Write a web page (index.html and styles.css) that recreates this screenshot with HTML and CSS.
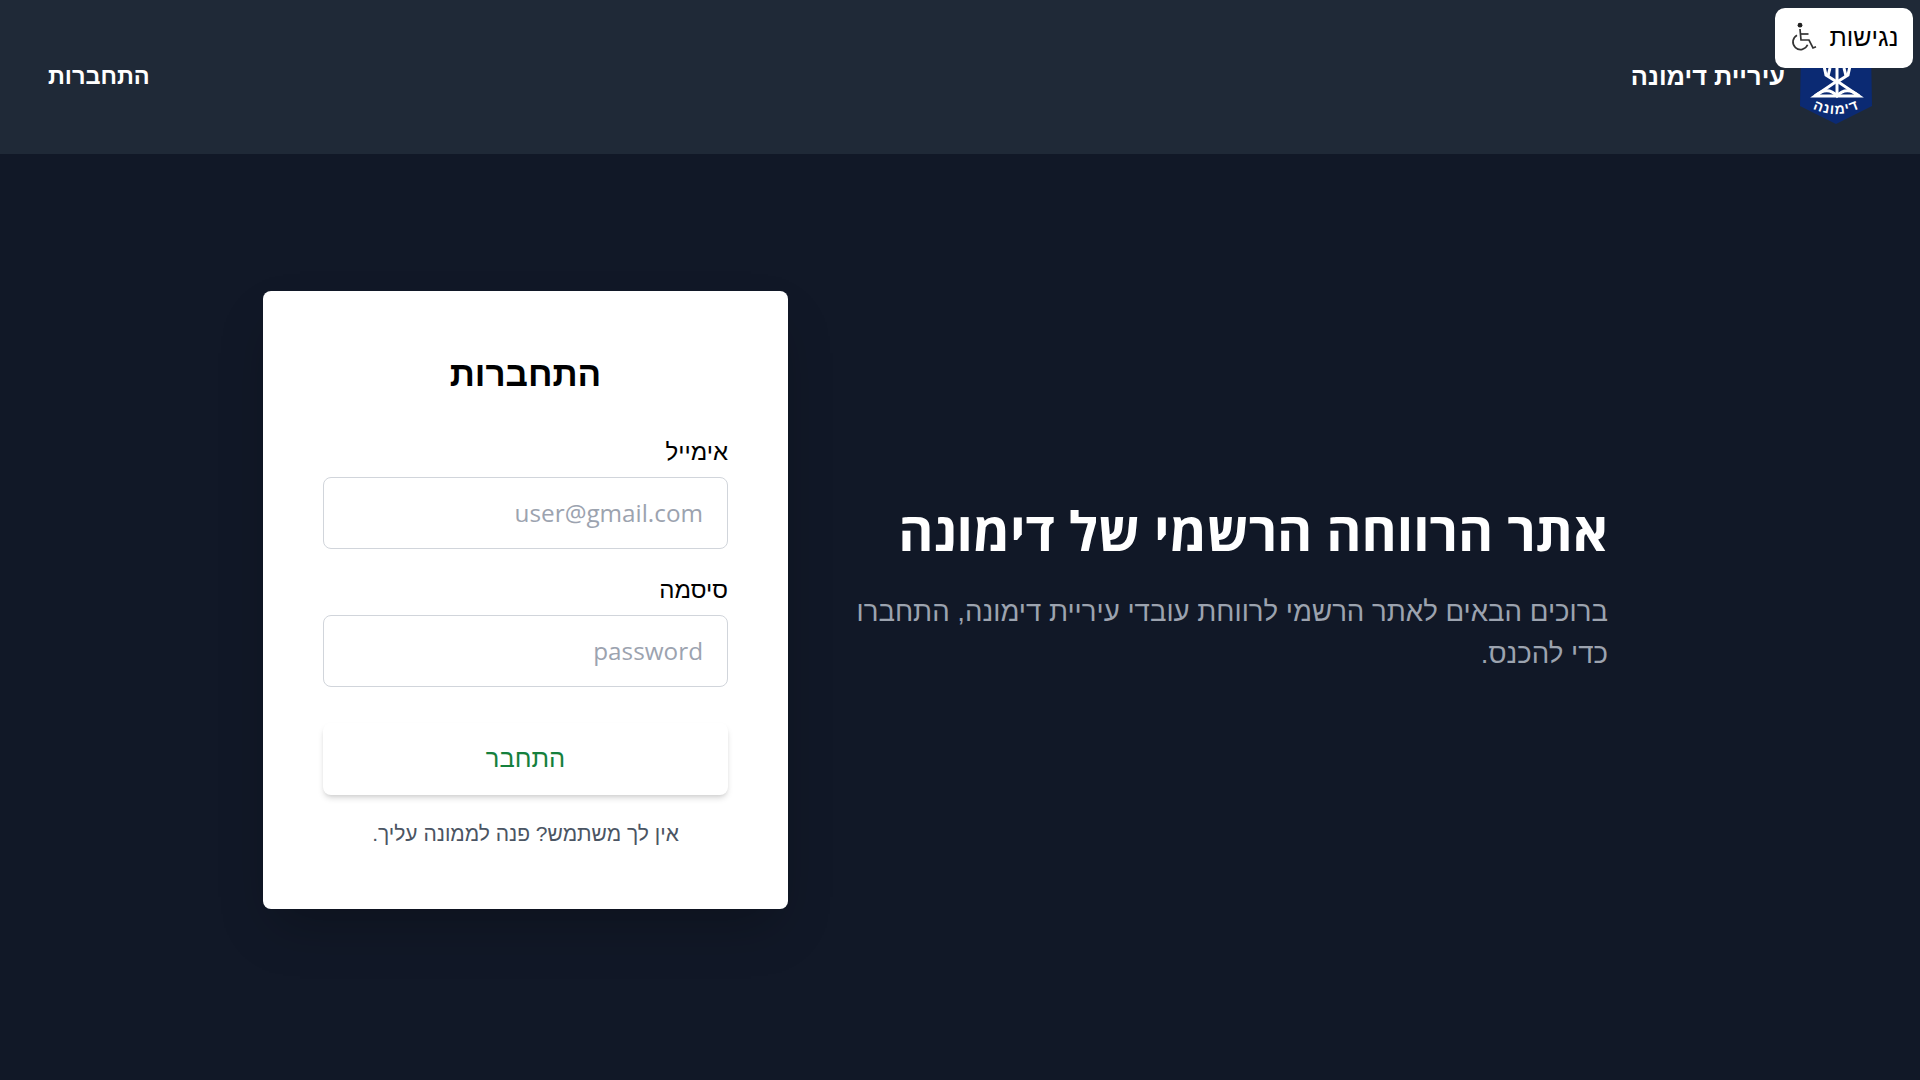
FILE: index.html
```html
<!DOCTYPE html>
<html lang="he" dir="rtl">
<head>
<meta charset="utf-8">
<title>עיריית דימונה</title>
<link rel="stylesheet" href="styles.css">
</head>
<body>
<button class="a11y" type="button">
  <span class="a11y-label">נגישות</span>
  <svg class="a11y-icon" viewBox="0 0 28 30" width="28" height="30" fill="none" stroke="#333" stroke-width="1.7" aria-hidden="true">
    <circle cx="10" cy="3.2" r="2.4" fill="#222" stroke="none"/>
    <path d="M10 7l1 11h8l4 8 3-1.2"/>
    <path d="M10.5 12h8"/>
    <path d="M7 13.2a7.6 7.6 0 1 0 10.6 9.6"/>
  </svg>
</button>
<header class="nav">
  <div class="brand">
    <svg class="logo" viewBox="0 0 72 76" width="72" height="76" aria-hidden="true">
      <path d="M1 0h70l1 58-36 18L0 58z" fill="#0b2a73"/>
      <g fill="none" stroke="#fff" stroke-width="3">
        <path d="M37 18v30"/>
        <path d="M24 18l2 9 11 7 11-7 2-9"/>
        <path d="M30 20l-2 8M44 20l2 8"/>
        <path d="M15 48l22-15 22 15z"/>
        <path d="M15 48c8-7 16-7 22 0c6-7 14-7 22 0"/>
      </g>
      <path id="logo-arc" d="M0 48Q36 76 72 48" fill="none"/>
      <text class="logo-text" dominant-baseline="middle"><textPath href="#logo-arc" startOffset="50%" text-anchor="middle">דימונה</textPath></text>
    </svg>
    <a class="brand-name" href="#">עיריית דימונה</a>
  </div>
  <a class="nav-link" href="#">התחברות</a>
</header>
<main class="hero">
  <section class="intro">
    <h1>אתר הרווחה הרשמי של דימונה</h1>
    <p>ברוכים הבאים לאתר הרשמי לרווחת עובדי עיריית דימונה, התחברו כדי להכנס.</p>
  </section>
  <form class="card">
    <h2>התחברות</h2>
    <label for="email">אימייל</label>
    <input id="email" type="text" placeholder="user@gmail.com">
    <label for="password" class="second">סיסמה</label>
    <input id="password" type="password" placeholder="password">
    <button class="submit" type="button">התחבר</button>
    <p class="hint">אין לך משתמש? פנה לממונה עליך.</p>
  </form>
</main>
</body>
</html>
```
FILE: styles.css
```css
* { box-sizing: border-box; }
html, body { margin: 0; height: 100%; }
body {
  background: #111827;
  font-family: "Liberation Sans", "Open Sans", sans-serif;
  overflow: hidden;
}
.nav {
  height: 154px;
  background: #1f2937;
  display: flex;
  align-items: center;
  justify-content: space-between;
  padding: 0 48px;
}
.brand { display: flex; align-items: center; gap: 15px; }
.logo { margin-top: 18px; }
.logo-text { fill: #fff; font-size: 14px; font-weight: 700; letter-spacing: .6px; }
.brand-name, .nav-link {
  color: #fff;
  text-decoration: none;
  font-weight: 700;
  margin-top: -2px;
}
.brand-name { font-size: 25.4px; }
.nav-link { font-size: 23.5px; }
.a11y {
  position: absolute;
  top: 8px;
  right: 7px;
  z-index: 2;
  width: 138px;
  height: 60px;
  display: flex;
  align-items: center;
  justify-content: center;
  gap: 12px;
  background: #fff;
  border: 0;
  border-radius: 10px;
  font: inherit;
  font-size: 25px;
  color: #000;
}
.a11y-label { margin-bottom: 2px; }
.a11y-icon { margin-bottom: 2px; }
.hero {
  display: flex;
  align-items: center;
  gap: 67px;
  padding: 137px 312px 0 0;
}
.intro { width: 753px; margin-top: -32px; }
.intro h1 {
  margin: 0;
  color: #fff;
  font-family: "Open Sans", sans-serif;
  font-size: 53.7px;
  font-weight: 700;
}
.intro p {
  margin: 24px 0 0;
  color: #9ca3af;
  font-size: 27.6px;
  line-height: 42px;
}
.card {
  width: 525px;
  height: 618px;
  background: #fff;
  border-radius: 8px;
  padding: 60px;
  display: flex;
  flex-direction: column;
  box-shadow: 0 25px 50px -12px rgba(0,0,0,.25);
}
.card h2 {
  margin: 1px 0 38px;
  text-align: center;
  font-size: 35px;
  font-weight: 700;
  color: #000;
  line-height: 44px;
}
.card label { font-size: 24px; color: #000; line-height: 36px; margin-bottom: 7px; }
.card label.second { margin-top: 23px; }
.card input {
  height: 72px;
  border: 1.5px solid #d1d5db;
  border-radius: 8px;
  padding: 0 24px 2px;
  font: inherit;
  font-family: "Open Sans", sans-serif;
  font-size: 24.3px;
  background: #fff;
}
.card input::placeholder { color: #9ca3af; }
.submit {
  margin-top: 36px;
  height: 72px;
  border: 0;
  border-radius: 8px;
  padding: 0 0 2px;
  background: #fff;
  color: #15803d;
  font: inherit;
  font-size: 25.5px;
  box-shadow: 0 4px 6px -1px rgba(0,0,0,.15), 0 2px 4px -2px rgba(0,0,0,.1);
}
.hint {
  margin: 27px 0 0;
  text-align: center;
  font-size: 21px;
  color: #4b5563;
}
```
